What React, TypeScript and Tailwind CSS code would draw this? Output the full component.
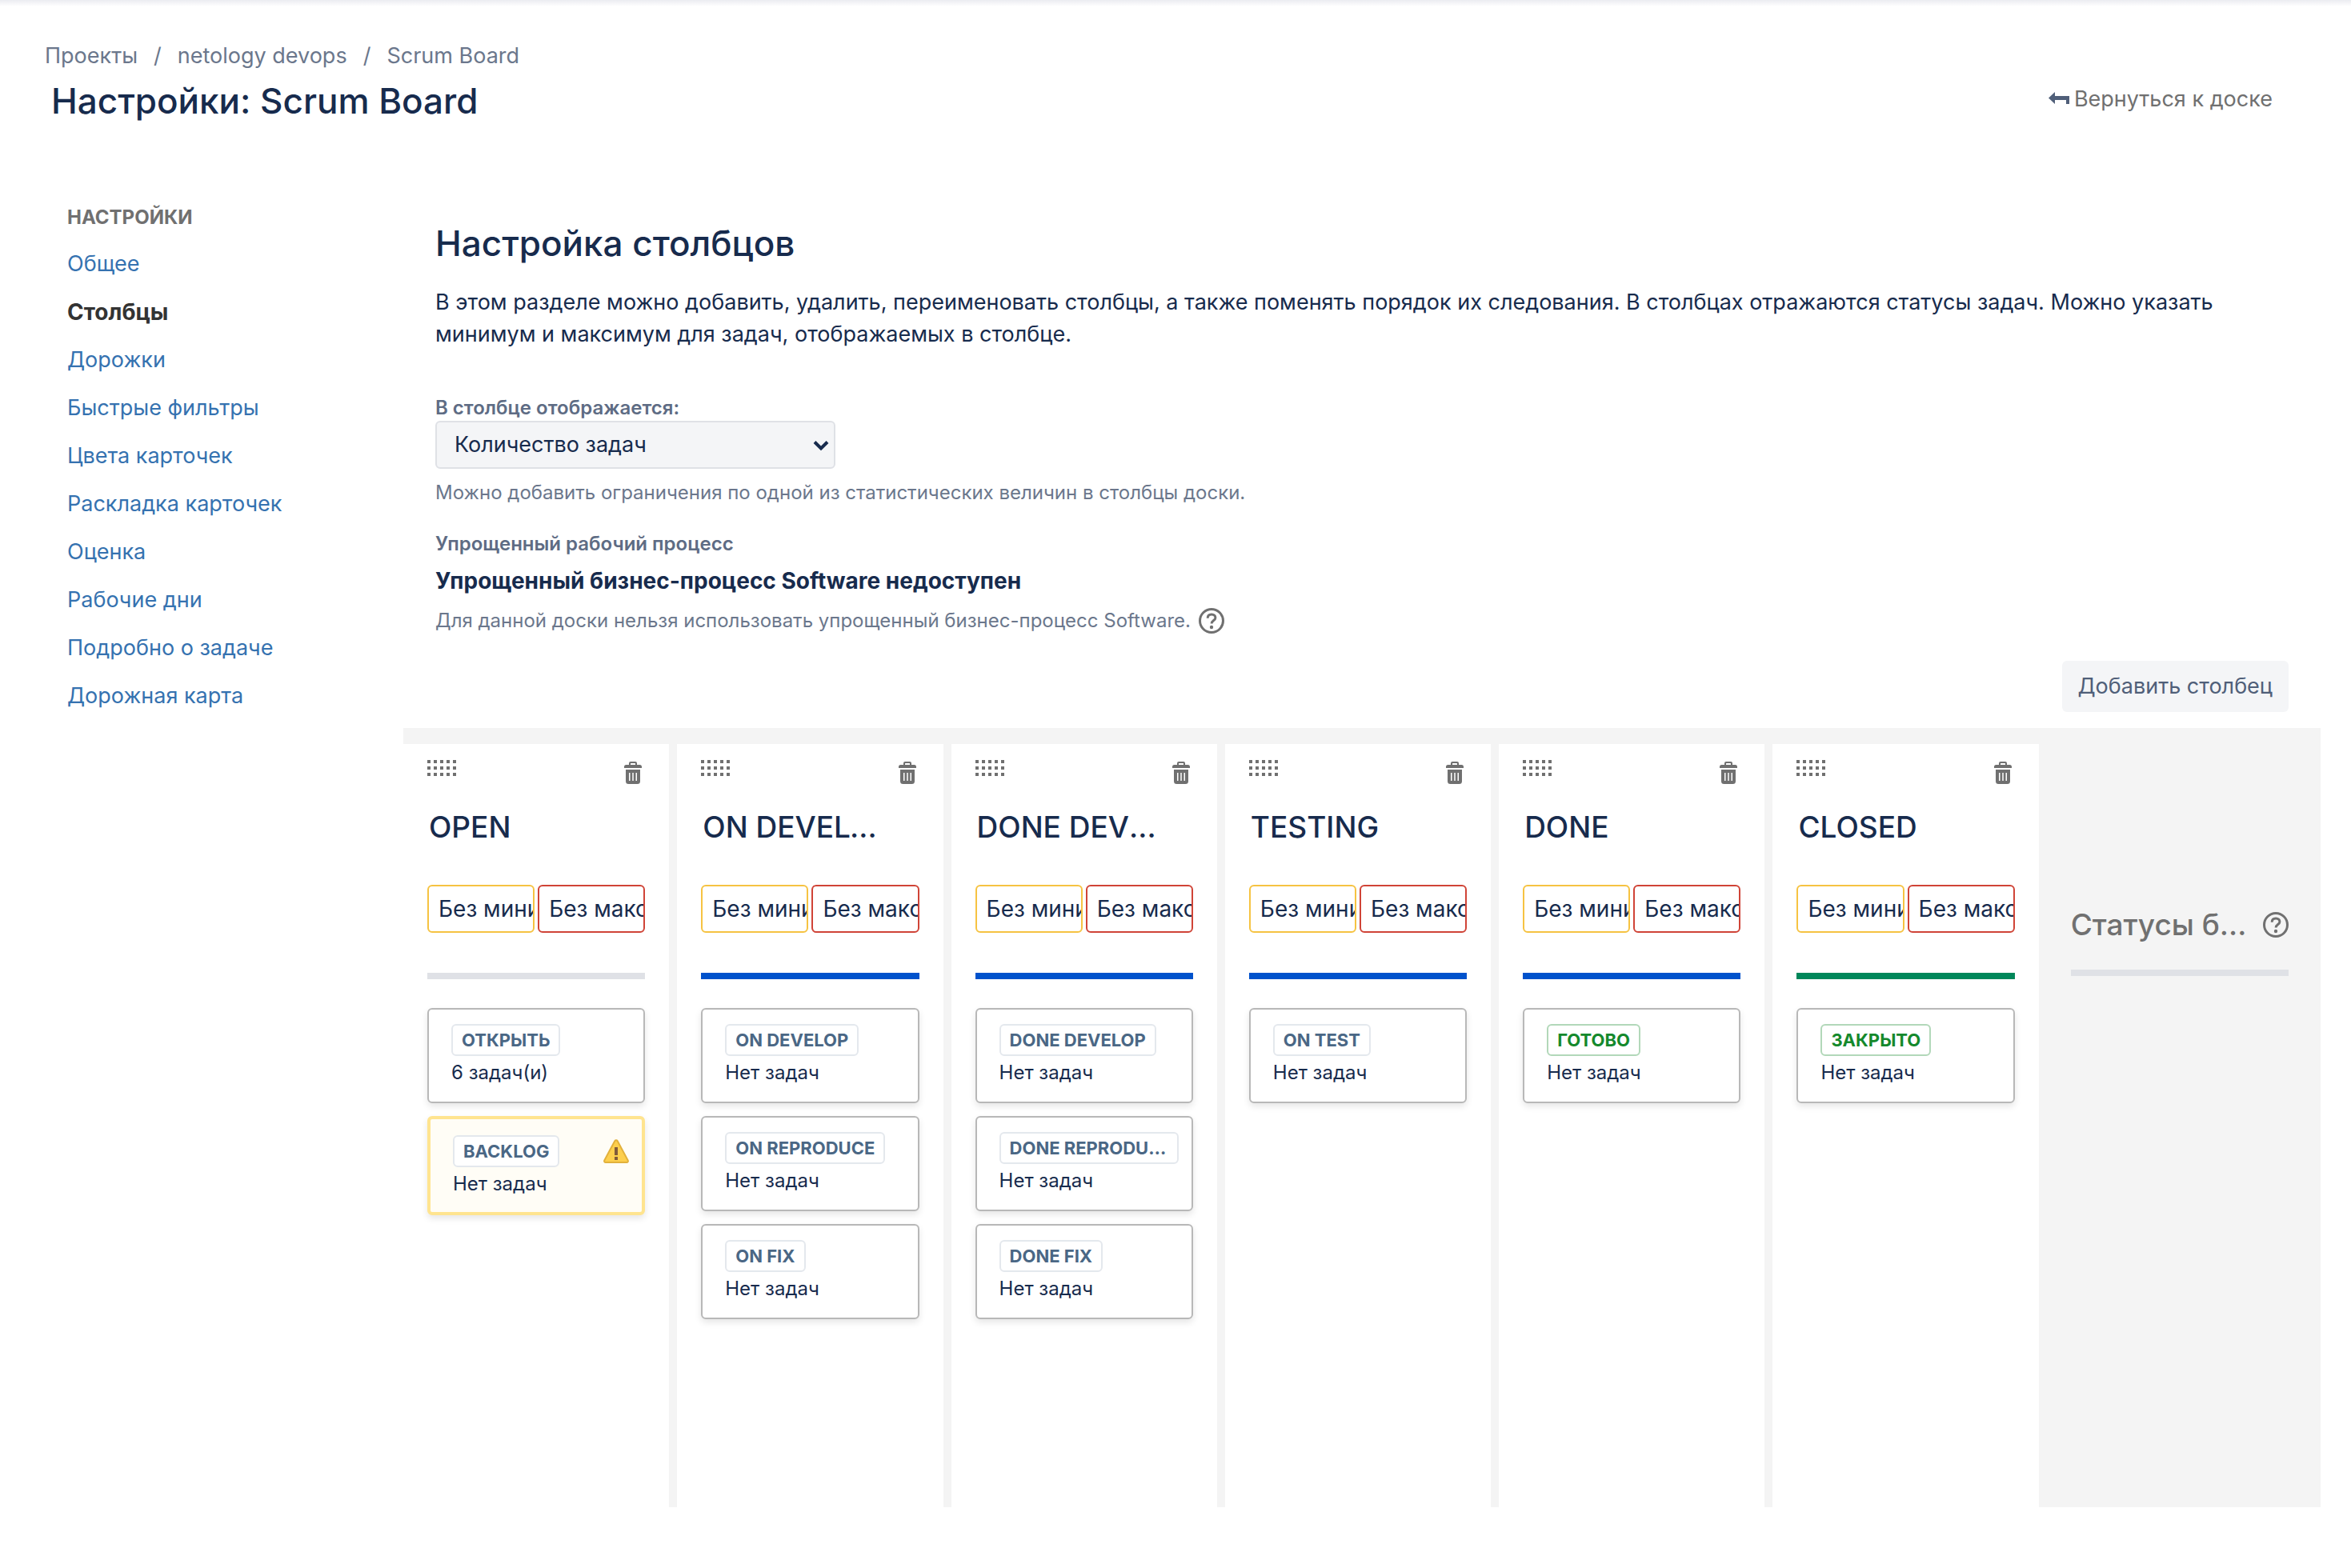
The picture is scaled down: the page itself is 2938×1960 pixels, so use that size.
import React, { useState } from "react";

const NAV = [
  "Общее",
  "Столбцы",
  "Дорожки",
  "Быстрые фильтры",
  "Цвета карточек",
  "Раскладка карточек",
  "Оценка",
  "Рабочие дни",
  "Подробно о задаче",
  "Дорожная карта",
];

type Status = { name: string; count: string; done?: boolean; warning?: boolean };
type Column = { title: string; bar: string; statuses: Status[] };

const NONE = "Нет задач";

const COLUMNS: Column[] = [
  {
    title: "OPEN",
    bar: "bg-[#dfe1e6]",
    statuses: [
      { name: "ОТКРЫТЬ", count: "6 задач(и)" },
      { name: "BACKLOG", count: NONE, warning: true },
    ],
  },
  {
    title: "ON DEVELOP",
    bar: "bg-[#0052cc]",
    statuses: [
      { name: "ON DEVELOP", count: NONE },
      { name: "ON REPRODUCE", count: NONE },
      { name: "ON FIX", count: NONE },
    ],
  },
  {
    title: "DONE DEVELOP",
    bar: "bg-[#0052cc]",
    statuses: [
      { name: "DONE DEVELOP", count: NONE },
      { name: "DONE REPRODUCE", count: NONE },
      { name: "DONE FIX", count: NONE },
    ],
  },
  { title: "TESTING", bar: "bg-[#0052cc]", statuses: [{ name: "ON TEST", count: NONE }] },
  { title: "DONE", bar: "bg-[#0052cc]", statuses: [{ name: "ГОТОВО", count: NONE, done: true }] },
  { title: "CLOSED", bar: "bg-[#00875a]", statuses: [{ name: "ЗАКРЫТО", count: NONE, done: true }] },
];

function HelpIcon() {
  return (
    <svg viewBox="0 0 32 32" className="size-8 shrink-0 text-[#707070]" fill="none" stroke="currentColor" aria-hidden="true">
      <circle cx="16" cy="16" r="14.5" strokeWidth="3" />
      <path d="M11.2 12.800c0-3 2-4.800 4.900-4.800s4.800 1.700 4.800 4.200c0 3.400-4.800 3.400-4.800 7.400" strokeWidth="3" />
      <circle cx="16" cy="24" r="2.200" fill="currentColor" stroke="none" />
    </svg>
  );
}

function TrashIcon() {
  return (
    <svg viewBox="0 0 22 28" className="h-7 w-[22px]" fill="#707070" aria-hidden="true">
      <path fillRule="evenodd" d="M8 0h6a2 2 0 0 1 2 2v2h3.500a2.500 2.500 0 0 1 2.500 2.500V8H0V6.500A2.500 2.500 0 0 1 2.500 4H6V2a2 2 0 0 1 2-2zm.5 2a.5.5 0 0 0-.5.5V4h6V2.500a.5.5 0 0 0-.5-.5z" />
      <path fillRule="evenodd" d="M2 10h18v14.500a3.500 3.500 0 0 1-3.500 3.500h-11A3.500 3.500 0 0 1 2 24.500zm4 4v10h1.500V14zm4.250 0v10h1.500V14zm4.250 0v10H16V14z" />
    </svg>
  );
}

function DragHandle() {
  return (
    <svg viewBox="0 0 36 20" className="h-5 w-9" fill="#707070" aria-hidden="true">
      {[0, 8, 16].map((y) => [0, 8, 16, 24, 32].map((x) => <rect key={`${x}-${y}`} x={x} y={y} width="4" height="4" />))}
    </svg>
  );
}

function WarningIcon() {
  return (
    <svg viewBox="0 0 32 30" className="h-[30px] w-8" aria-hidden="true">
      <path d="M14.300 2.200a2 2 0 0 1 3.400 0l13 24.300a1.700 1.700 0 0 1-1.500 2.500H2.800a1.700 1.700 0 0 1-1.500-2.500z" fill="#fdcf4d" stroke="#e2b13c" strokeWidth="2" />
      <path d="M14 10h4v10h-4zM14 22h4v4h-4z" fill="#815b3a" />
    </svg>
  );
}

function StatusCard({ status }: { status: Status }) {
  return (
    <li
      className={
        status.warning
          ? "rounded-md border-4 border-[#ffe48f] bg-[#fffdf6] px-7 pt-5 pb-[18px] shadow-[0_4px_8px_rgba(0,0,0,0.1)]"
          : "rounded-md border-2 border-[#b8b8b8] bg-white px-7 pt-[18px] pb-[19px] shadow-[0_4px_8px_rgba(0,0,0,0.1)]"
      }
    >
      <div className="-mr-3 flex items-center justify-between">
        <span
          className={
            status.done
              ? "max-w-[228px] truncate rounded-md border-2 border-[#b2d8b9] bg-white px-[11px] text-[22px] leading-9 font-bold text-[#14892c]"
              : "max-w-[228px] truncate rounded-md border-2 border-[#e4e8ed] bg-white px-[11px] text-[22px] leading-9 font-bold text-[#4a6785]"
          }
        >
          {status.name}
        </span>
        {status.warning && <WarningIcon />}
      </div>
      <p className="pt-1 text-[24px] leading-[34px]">{status.count}</p>
    </li>
  );
}

function BoardColumn({ column }: { column: Column }) {
  return (
    <section className="min-w-0 bg-white px-[30px] pt-5">
      <div className="flex h-[42px] items-start justify-between pr-1">
        <button type="button" aria-label={`Переместить ${column.title}`}>
          <DragHandle />
        </button>
        <button type="button" aria-label={`Удалить ${column.title}`} className="pt-0.5">
          <TrashIcon />
        </button>
      </div>
      <h3 className="truncate pt-3.5 pr-10 pl-0.5 text-[37px] leading-[56px] font-medium">{column.title}</h3>
      <div className="grid grid-cols-2 gap-1 pt-11">
        <input
          aria-label={`Минимум ${column.title}`}
          defaultValue="Без минимума"
          className="h-[60px] min-w-0 rounded-md border-2 border-[#f6c342] bg-white pl-3 text-[28px] outline-none"
        />
        <input
          aria-label={`Максимум ${column.title}`}
          defaultValue="Без максимума"
          className="h-[60px] min-w-0 rounded-md border-2 border-[#d04437] bg-white pl-3 text-[28px] outline-none"
        />
      </div>
      <div className={`mt-[50px] h-2 ${column.bar}`} />
      <ul className="flex flex-col gap-4 pt-9">
        {column.statuses.map((s) => (
          <StatusCard key={s.name} status={s} />
        ))}
      </ul>
    </section>
  );
}

export default function App() {
  const [metric, setMetric] = useState("Количество задач");
  return (
    <div className="min-h-screen bg-white font-['Inter','Noto_Sans',sans-serif] text-[#172b4d]">
      <div className="h-2 bg-linear-to-b from-[#ebecf1] to-white" />
      <header className="flex items-start justify-between pt-10 pr-[98px] pl-14">
        <div>
          <nav aria-label="Навигация" className="flex gap-5 text-[27px] leading-[44px] text-[#6b778c]">
            <a href="#projects">Проекты</a>
            <span>/</span>
            <a href="#project">netology devops</a>
            <span>/</span>
            <a href="#board">Scrum Board</a>
          </nav>
          <h1 className="pt-1 pl-2 text-[44px] leading-[60px] font-medium">Настройки: Scrum Board</h1>
        </div>
        <a href="#back" className="mt-14 flex items-start gap-1.5 text-[27px] leading-10 text-[#707070]">
          <svg viewBox="0 0 26 15" className="mt-[11px] h-[15px] w-[26px]" fill="#505f79" aria-hidden="true">
            <path d="M0 7.500 8 0v5h18v10h-4v-5H8v5z" />
          </svg>
          Вернуться к доске
        </a>
      </header>

      <div className="flex pt-24 pr-[38px] pl-[84px]">
        <aside className="w-[420px] shrink-0">
          <h2 className="text-[24px] leading-10 font-bold text-[#707070]">НАСТРОЙКИ</h2>
          <ul className="pt-2">
            {NAV.map((item) => (
              <li key={item} className="h-[60px] leading-[60px]">
                {item === "Столбцы" ? (
                  <a href="#columns" aria-current="page" className="text-[28px] font-bold text-[#333333]">{item}</a>
                ) : (
                  <a href="#settings" className="text-[27px] text-[#3572b0]">{item}</a>
                )}
              </li>
            ))}
          </ul>
        </aside>

        <main className="min-w-0 flex-1 pt-[22px]">
          <div className="pr-10 pl-10">
            <h2 className="text-[44px] leading-[60px] font-medium">Настройка столбцов</h2>
            <p className="pt-6 text-[27px] leading-10">
              В этом разделе можно добавить, удалить, переименовать столбцы, а также поменять порядок их следования. В столбцах отражаются статусы задач. Можно указать минимум и максимум для задач, отображаемых в столбце.
            </p>
            <div className="flex flex-col items-start pt-14">
              <label htmlFor="metric" className="text-[24px] leading-8 font-semibold text-[#5e6c84]">
                В столбце отображается:
              </label>
              <div className="relative w-[500px]">
                <select
                  id="metric"
                  value={metric}
                  onChange={(e) => setMetric(e.target.value)}
                  className="h-[60px] w-full appearance-none rounded-md border-2 border-[#dfe1e6] bg-[#f4f5f7] pl-[22px] text-[27px]"
                >
                  <option>Количество задач</option>
                  <option>Нет</option>
                </select>
                <svg viewBox="0 0 20 14" className="pointer-events-none absolute top-6 right-2 h-3.5 w-5" fill="none" stroke="#172b4d" strokeWidth="4" aria-hidden="true">
                  <path d="M2 2.500 10 10.500 18 2.500" />
                </svg>
              </div>
              <p className="pt-3 text-[24px] leading-9 text-[#6b778c]">
                Можно добавить ограничения по одной из статистических величин в столбцы доски.
              </p>
            </div>
            <h3 className="pt-7 text-[24px] leading-9 font-semibold text-[#5e6c84]">Упрощенный рабочий процесс</h3>
            <p className="pt-2 text-[28px] leading-10 font-bold">Упрощенный бизнес-процесс Software недоступен</p>
            <div className="flex items-end gap-2.5 pt-2.5">
              <p className="text-[24px] leading-10 text-[#6b778c]">
                Для данной доски нельзя использовать упрощенный бизнес-процесс Software.
              </p>
              <button type="button" aria-label="Справка" className="pb-1">
                <HelpIcon />
              </button>
            </div>
            <div className="flex justify-end pt-[30px] pb-5">
              <button type="button" className="h-16 rounded-md bg-[#f4f5f7] px-5 text-[27px] text-[#505f79]">
                Добавить столбец
              </button>
            </div>
          </div>

          <div className="grid min-h-[974px] grid-cols-7 gap-2.5 bg-[#f4f4f4] pt-5 pr-2.5">
            {COLUMNS.map((c) => (
              <BoardColumn key={c.title} column={c} />
            ))}
            <section className="min-w-0 px-[30px] pt-[198px] text-[#707070]">
              <div className="flex items-center gap-3">
                <h3 className="min-w-0 flex-1 truncate text-[37px] leading-[56px] font-medium">Статусы без привязки</h3>
                <button type="button" aria-label="Справка по статусам">
                  <HelpIcon />
                </button>
              </div>
              <div className="mt-7 h-2 bg-[#dfe1e6]" />
            </section>
          </div>
        </main>
      </div>
    </div>
  );
}
